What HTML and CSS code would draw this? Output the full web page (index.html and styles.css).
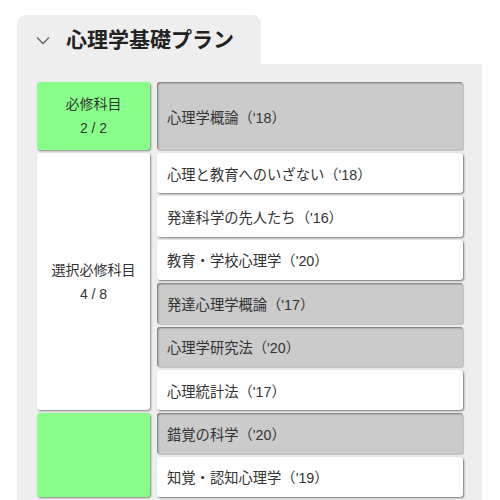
FILE: index.html
```html
<!DOCTYPE html>
<html lang="ja">
<head>
<meta charset="utf-8">
<link rel="stylesheet" href="styles.css">
</head>
<body>
<div class="plan">
  <div class="tab">
    <svg class="chev" width="14" height="9" viewBox="0 0 14 9"><path d="M1 1.5 L7 7.5 L13 1.5" fill="none" stroke="#666" stroke-width="1.4"/></svg>
    <h1 class="title">心理学基礎プラン</h1>
  </div>
  <div class="panel">
    <div class="group">
      <div class="req green"><div>必修科目</div><div>2 / 2</div></div>
      <div class="items">
        <div class="item taken">心理学概論（'18）</div>
      </div>
    </div>
    <div class="group">
      <div class="req white"><div>選択必修科目</div><div>4 / 8</div></div>
      <div class="items">
        <div class="item">心理と教育へのいざない（'18）</div>
        <div class="item">発達科学の先人たち（'16）</div>
        <div class="item">教育・学校心理学（'20）</div>
        <div class="item taken">発達心理学概論（'17）</div>
        <div class="item taken">心理学研究法（'20）</div>
        <div class="item">心理統計法（'17）</div>
      </div>
    </div>
    <div class="group">
      <div class="req green"></div>
      <div class="items">
        <div class="item taken">錯覚の科学（'20）</div>
        <div class="item">知覚・認知心理学（'19）</div>
      </div>
    </div>
  </div>
</div>
</body>
</html>
```

FILE: styles.css
```css
html, body {
  margin: 0;
  background: #fff;
}
body {
  padding: 15px 18px 0 17px;
  font-family: "Liberation Sans", "Noto Sans CJK JP", sans-serif;
  color: #333;
  overflow: hidden;
}
.plan {
  display: flex;
  flex-direction: column;
  align-items: flex-start;
}
.tab {
  width: 244px;
  height: 49px;
  box-sizing: border-box;
  background: #eeeeee;
  border-radius: 9px 9px 0 0;
  display: flex;
  align-items: center;
  padding: 0 0 0 19px;
}
.chev {
  margin-top: 2px;
  flex: none;
}
.title {
  margin: 0 0 0 16px;
  font-size: 21px;
  font-weight: bold;
  color: #222;
  letter-spacing: 0;
  line-height: 1;
}
.panel {
  align-self: stretch;
  background: #eeeeee;
  padding: 18px 19px 20px 20px;
  display: flex;
  flex-direction: column;
  gap: 3px;
}
.group {
  display: grid;
  grid-template-columns: 113px 306px;
  column-gap: 7px;
}
.req {
  border-radius: 3px;
  box-shadow: 1px 1px 2px rgba(0,0,0,0.45);
  display: flex;
  flex-direction: column;
  justify-content: center;
  align-items: center;
  font-size: 14px;
  line-height: 24px;
  color: #333;
}
.green { background: #88ff88; }
.white { background: #ffffff; }
.items {
  display: flex;
  flex-direction: column;
  gap: 3px;
}
.item {
  flex: 1;
  min-height: 40.4px;
  box-sizing: border-box;
  display: flex;
  align-items: center;
  padding: 0 10px;
  font-size: 14.3px;
  background: #fff;
  border-radius: 3px;
  box-shadow: 1px 1px 2px rgba(0,0,0,0.5);
}
.item.taken {
  background: #cbcbcb;
  box-shadow: inset 1px 1px 2px rgba(0,0,0,0.45), 1px 1px 1px rgba(0,0,0,0.2);
}
.group:first-child .item {
  min-height: 68px;
}
```
